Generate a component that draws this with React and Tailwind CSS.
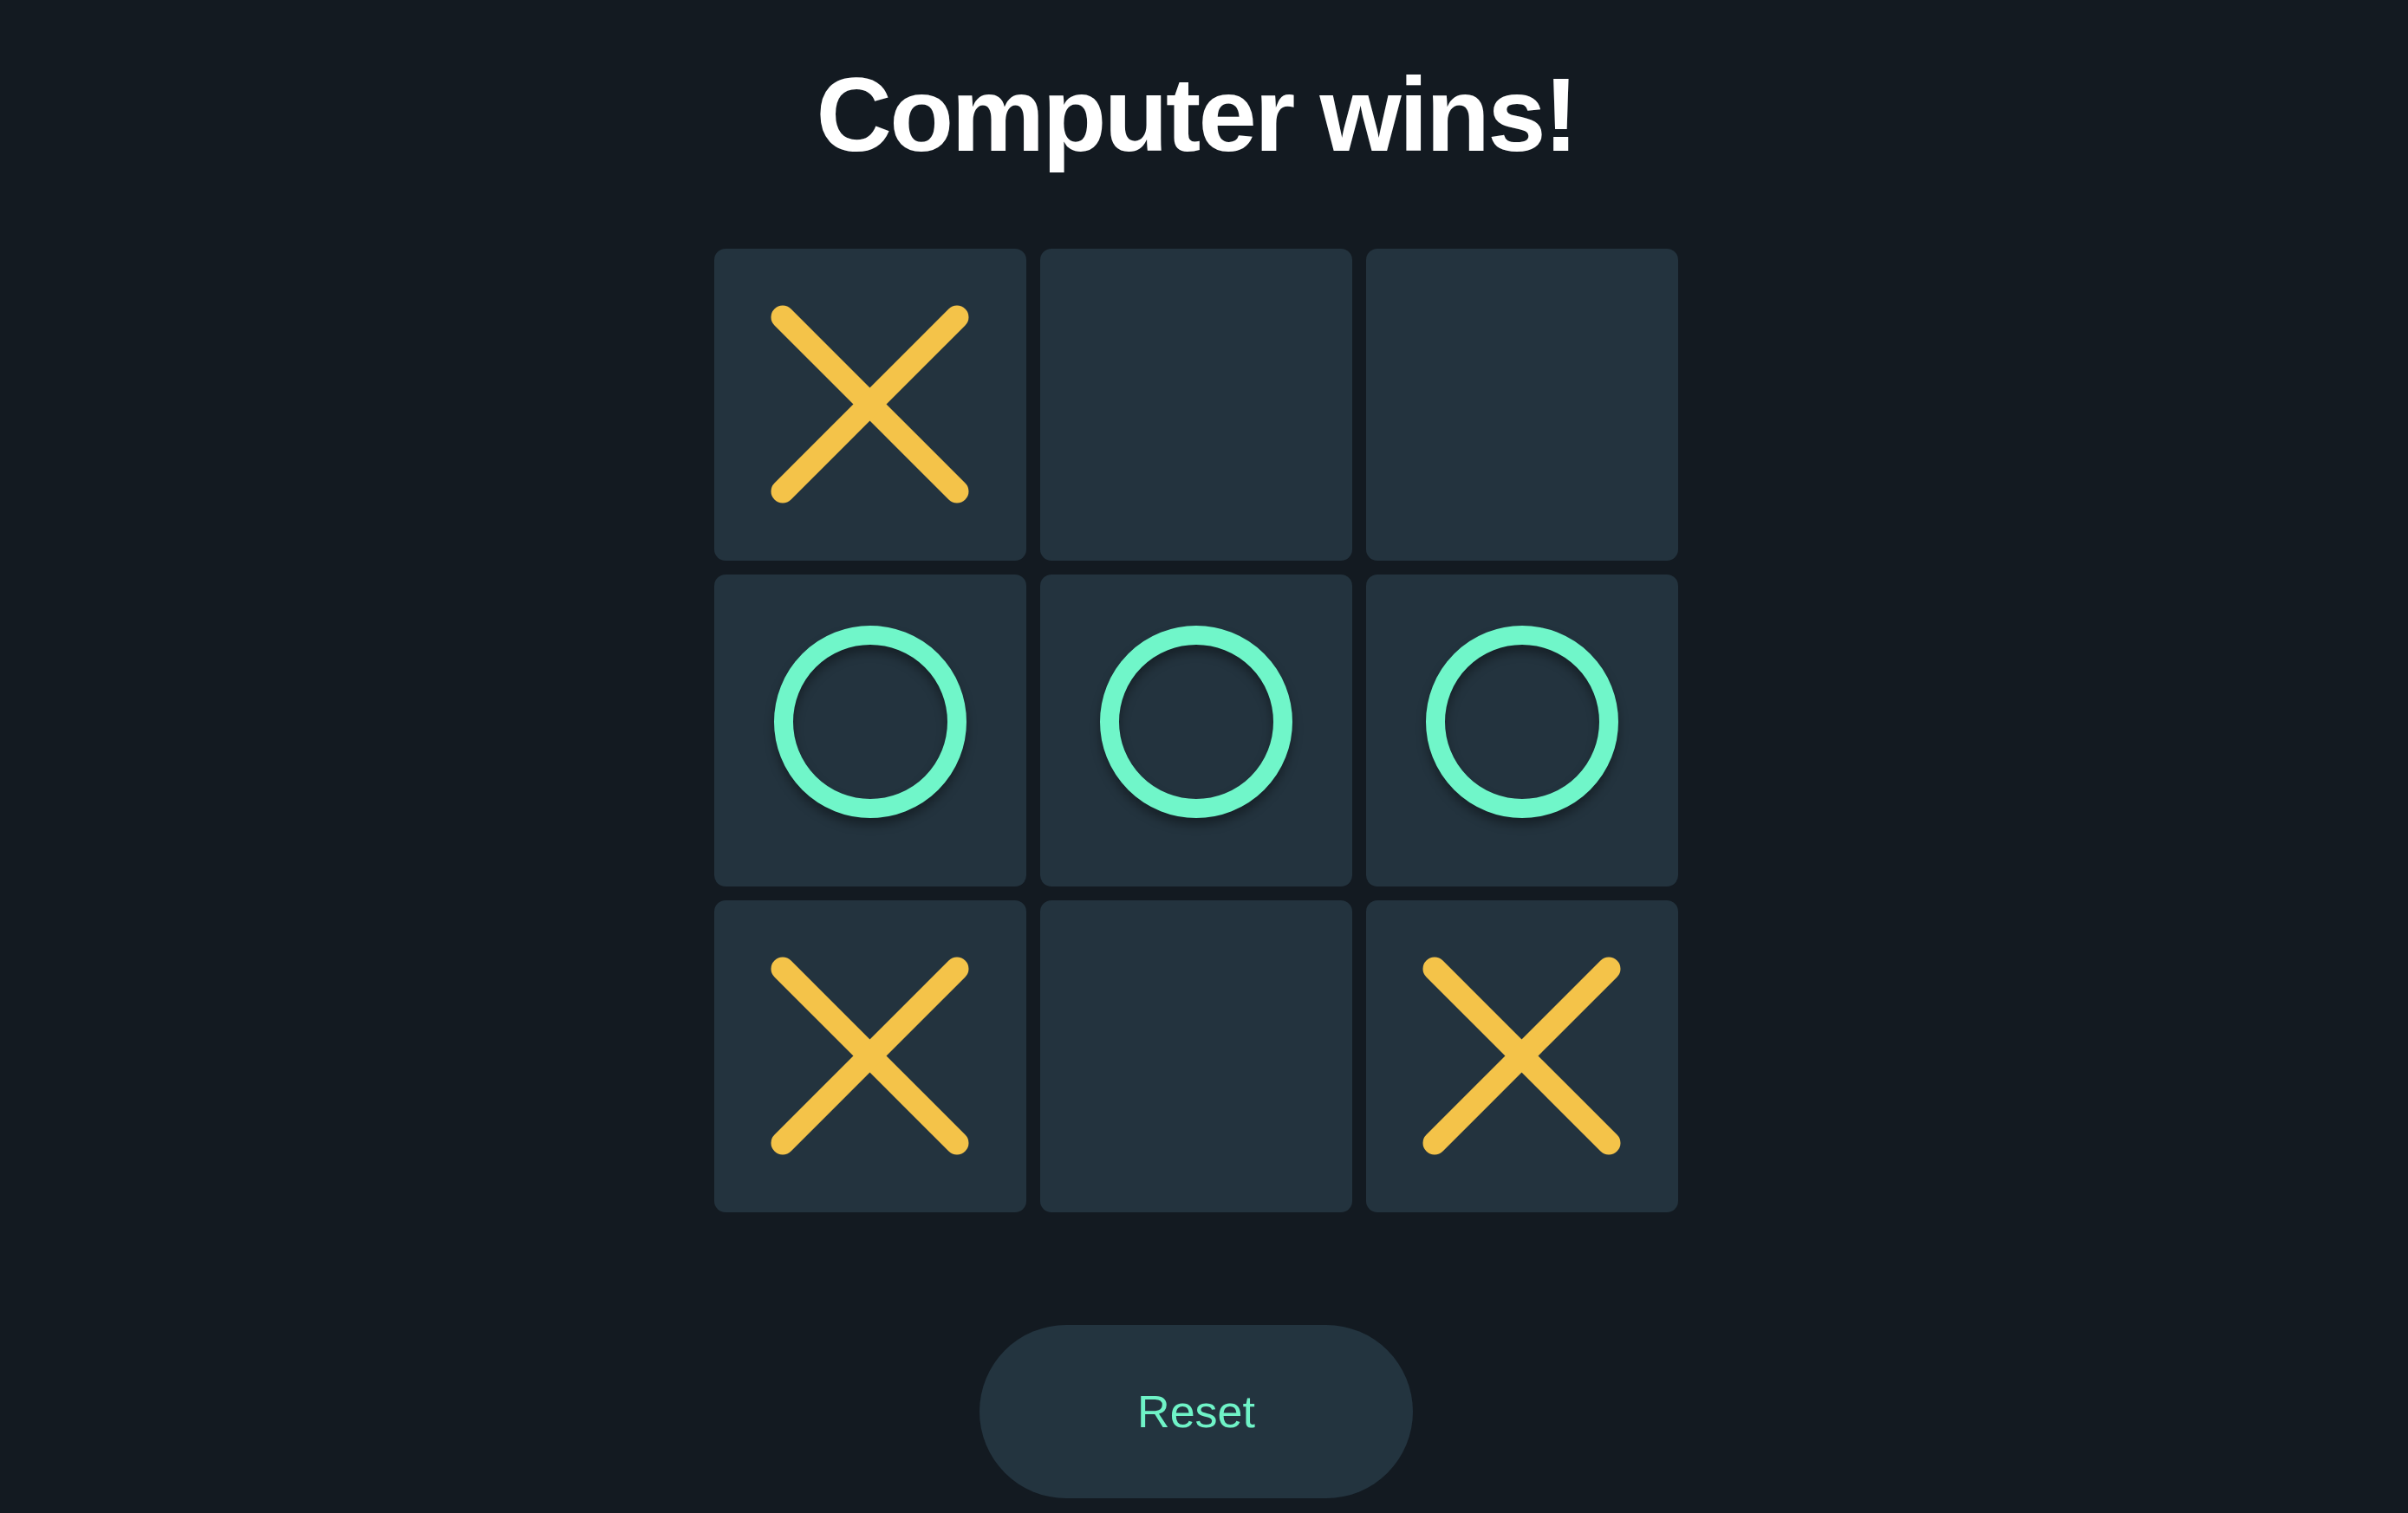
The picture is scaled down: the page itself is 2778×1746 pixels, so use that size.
import React from 'react';

const BOARD = ['X', null, null, 'O', 'O', 'O', 'X', null, 'X'];

function Mark({ value }) {
    if (value === 'X') {
        return (
            <svg viewBox="0 0 360 360" className="h-full w-full">
                <g stroke="#f4c349" strokeWidth="27" strokeLinecap="round">
                    <line x1="79" y1="79" x2="280" y2="280" />
                    <line x1="280" y1="79" x2="79" y2="280" />
                </g>
            </svg>
        );
    }
    if (value === 'O') {
        return (
            <svg viewBox="0 0 360 360" className="h-full w-full drop-shadow-[0_8px_6px_rgba(0,0,0,0.35)]">
                <circle cx="180" cy="170" r="100" fill="none" stroke="#70f6c9" strokeWidth="22" />
            </svg>
        );
    }
    return null;
}

export default function App() {
    return (
        <div className="min-h-screen bg-[#131a21] pr-[18px] font-['Liberation_Sans',Arial,sans-serif]">
            <div className="flex flex-col items-center pt-[72px]">
                <h1 className="text-[121px] leading-none font-bold tracking-[-0.022em] text-white">
                    Computer wins!
                </h1>

                <div className="mt-[94px] grid grid-cols-[repeat(3,360px)] gap-4">
                    {BOARD.map((v, i) => (
                        <div key={i} className="h-[360px] w-[360px] rounded-[13px] bg-[#23333e]">
                            <Mark value={v} />
                        </div>
                    ))}
                </div>

                <button className="mt-[130px] h-[200px] w-[500px] rounded-full bg-[#23343f] text-[52px] text-[#6ff3c7]">
                    Reset
                </button>
            </div>
        </div>
    );
}
